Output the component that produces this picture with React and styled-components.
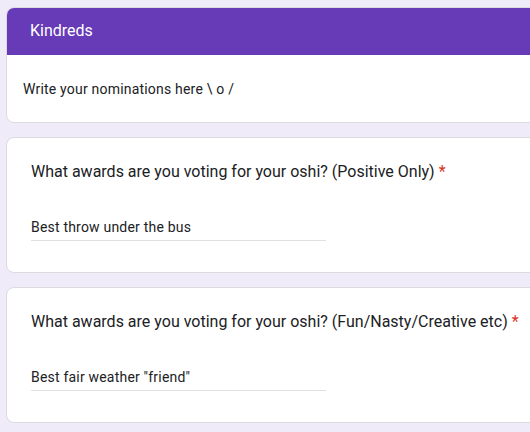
import React from "react";
import styled, { createGlobalStyle } from "styled-components";

const Global = createGlobalStyle`
  html, body {
    margin: 0;
    padding: 0;
    background: #f0ebf8;
    overflow: hidden;
  }
  body {
    font-family: Roboto, "Noto Sans", Arial, sans-serif;
    color: #202124;
  }
`;

const Page = styled.div`
  display: flex;
  flex-direction: column;
  gap: 14px;
  padding: 7px 0 0 6px;
  width: 640px;
`;

const Card = styled.div`
  background: #fff;
  border: 1px solid #dadce0;
  border-radius: 8px;
  overflow: hidden;
  width: 640px;
  box-sizing: border-box;
`;

const HeaderBand = styled.div`
  background: #673ab7;
  height: 48px;
  margin: -1px -1px 0 -1px;
  display: flex;
  align-items: center;
  padding-left: 24px;
  color: #fff;
  font-size: 16px;
  line-height: 24px;
`;

const Description = styled.div`
  height: 67px;
  display: flex;
  align-items: center;
  padding-left: 16px;
  font-size: 14px;
  line-height: 20px;
  letter-spacing: 0.2px;
  color: #202124;
`;

const QuestionBody = styled.div`
  padding: 22px 24px 31px 24px;
`;

const Title = styled.div`
  font-size: 16px;
  line-height: 24px;
  color: #202124;
`;

const Required = styled.span`
  color: #d93025;
  margin-left: 4px;
`;

const Answer = styled.div`
  margin-top: 33px;
  width: 295px;
  font-size: 14px;
  line-height: 20px;
  letter-spacing: 0.2px;
  padding-bottom: 3px;
  border-bottom: 1px solid #e0e0e0;
  color: #202124;
`;

const questions = [
  {
    title: "What awards are you voting for your oshi? (Positive Only)",
    answer: "Best throw under the bus",
  },
  {
    title: "What awards are you voting for your oshi? (Fun/Nasty/Creative etc)",
    answer: 'Best fair weather "friend"',
  },
];

export default function App() {
  return (
    <>
      <Global />
      <Page>
        <Card>
          <HeaderBand>Kindreds</HeaderBand>
          <Description>Write your nominations here \ o /</Description>
        </Card>
        {questions.map((q) => (
          <Card key={q.title}>
            <QuestionBody>
              <Title>
                {q.title}
                <Required>*</Required>
              </Title>
              <Answer>{q.answer}</Answer>
            </QuestionBody>
          </Card>
        ))}
      </Page>
    </>
  );
}
